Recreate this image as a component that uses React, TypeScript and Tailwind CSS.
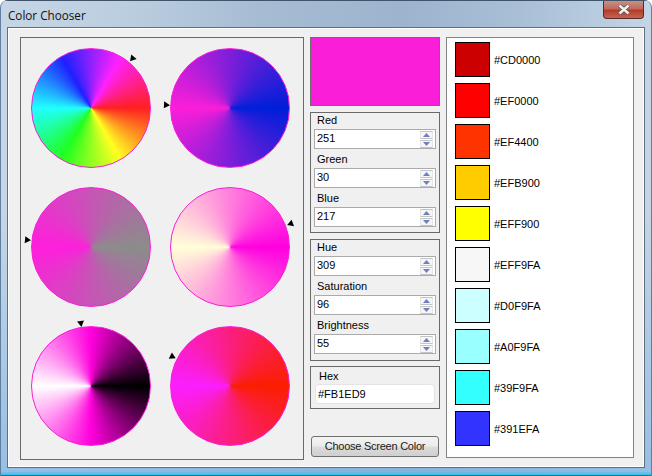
const WHEELS = [
  { id: 'hue', gradient: 'bg-[conic-gradient(from_90deg,#ff2020,#ffff20,#20ff20,#20ffff,#2020ff,#ff20ff,#ff2020)]', x: 101, y: 11 },
  { id: 'red', gradient: 'bg-[conic-gradient(from_90deg,#001ed9,#fb1ed9,#001ed9)]', x: -3, y: 57 },
  { id: 'sat', gradient: 'bg-[conic-gradient(from_90deg,#8c8c8c,#ff1edd,#8c8c8c)]', x: -3, y: 53 },
  { id: 'green', gradient: 'bg-[conic-gradient(from_90deg,#ff00e0,#ffffd9,#ff00e0)]', x: 120, y: 37 },
  { id: 'bright', gradient: 'bg-[conic-gradient(from_90deg,#000000,#ff00dd,#ffffff,#ff00dd,#000000)]', x: 50, y: -2 },
  { id: 'blue', gradient: 'bg-[conic-gradient(from_90deg,#fb1e00,#fb1eff,#fb1e00)]', x: 3, y: 31 },
];

const SWATCHES = [
  { hex: '#CD0000', bg: 'bg-[#cc0000]' },
  { hex: '#EF0000', bg: 'bg-[#ff0000]' },
  { hex: '#EF4400', bg: 'bg-[#ff3300]' },
  { hex: '#EFB900', bg: 'bg-[#ffcc00]' },
  { hex: '#EFF900', bg: 'bg-[#ffff00]' },
  { hex: '#EFF9FA', bg: 'bg-[#f7f7f7]' },
  { hex: '#D0F9FA', bg: 'bg-[#ccffff]' },
  { hex: '#A0F9FA', bg: 'bg-[#99ffff]' },
  { hex: '#39F9FA', bg: 'bg-[#33ffff]' },
  { hex: '#391EFA', bg: 'bg-[#3333ff]' },
];

function Wheel({ gradient, x, y }: { gradient: string; x: number; y: number }) {
  // marker always points at the wheel centre
  const angle = (Math.atan2(60 - y, 60 - x) * 180) / Math.PI;
  return (
    <div className={`relative w-[120px] h-[120px] rounded-full border border-[#fb1ed9] ${gradient}`}>
      <svg
        className="absolute w-2 h-2"
        viewBox="0 0 8 8"
        style={{ left: x - 5, top: y - 5, transform: `rotate(${angle}deg)` }}
      >
        <polygon points="1,0.5 7,4 1,7.5" fill="#000" />
      </svg>
    </div>
  );
}

function Spinner({ label, value, first }: { label: string; value: string; first?: boolean }) {
  return (
    <div className={first ? '' : 'mt-[3px]'}>
      <div className="h-4 pl-[3px] leading-[14px]">{label}</div>
      <div className="flex items-center h-5 border border-[#ababab] bg-white pl-[2px] pr-px">
        <span className="flex-1 leading-none pb-[2px]">{value}</span>
        <div className="flex flex-col gap-px w-[13px] mr-px">
          <div className="flex items-center justify-center h-2 bg-[#f6f6f8] border-y border-y-[#c4c4c4] border-x border-x-[#e6e6e6]">
            <svg className="w-[7px] h-1" viewBox="0 0 7 4">
              <polygon points="3.5,0 7,4 0,4" fill="#6d80bd" />
            </svg>
          </div>
          <div className="flex items-center justify-center h-2 bg-[#f6f6f8] border-y border-y-[#c4c4c4] border-x border-x-[#e6e6e6]">
            <svg className="w-[7px] h-1" viewBox="0 0 7 4">
              <polygon points="0,0 7,0 3.5,4" fill="#6d80bd" />
            </svg>
          </div>
        </div>
      </div>
    </div>
  );
}

export default function App() {
  return (
    <div className="w-[652px] h-[476px] flex flex-col overflow-hidden rounded-t-lg border-x border-x-[#5f7f9f] text-[11px] text-black font-['Liberation_Sans',sans-serif] bg-[linear-gradient(180deg,transparent_45%,rgba(125,178,228,0.65)_100%),linear-gradient(90deg,#c6d6e6_0%,#b9ccde_22%,#a6bcd3_40%,#9cb4ce_62%,#a8bfd6_80%,#c4d5e5_100%)]">
      {/* Title bar */}
      <div className="flex h-[27px] shrink-0 pl-[7px] border-t border-[#3f5468]">
        <span className="pt-[6px] text-[11.7px] leading-4 text-[#111] font-['Open_Sans',sans-serif]">
          Color Chooser
        </span>
        <div className="ml-auto mr-[7px] flex items-center justify-center w-[41px] h-[18px] rounded-b border border-t-0 border-[#5a2a28] bg-[linear-gradient(180deg,#c98f86_0%,#c06a5c_45%,#b23c2b_55%,#c66451_100%)]">
          <svg className="w-[14px] h-[11px]" viewBox="0 0 14 11">
            <path d="M2.5 1.5 L11.5 9.5 M11.5 1.5 L2.5 9.5" stroke="#5a4a4a" strokeWidth="4" />
            <path d="M2.5 1.5 L11.5 9.5 M11.5 1.5 L2.5 9.5" stroke="#f0eeee" strokeWidth="2.6" />
          </svg>
        </div>
      </div>

      {/* Client area */}
      <div className="flex flex-1 gap-[6px] mx-[6px] pl-3 pr-[9px] pt-[9px] bg-[#f0f0f0] border border-[#5f6f7f] shadow-[inset_0_0_0_1px_#ffffff]">
        <div className="w-[284px] h-[423px] border border-[#696969] pl-[10px] pt-[10px]">
          <div className="grid grid-cols-[120px_120px] gap-[19px]">
            {WHEELS.map((w) => (
              <Wheel key={w.id} gradient={w.gradient} x={w.x} y={w.y} />
            ))}
          </div>
        </div>

        <div className="flex flex-col w-[130px]">
          <div className="h-[69px] border border-[#6e6e6e] bg-[#fb1ed9]" />
          <div className="mt-[6px] h-[121px] border border-[#696969] px-[3px]">
            <Spinner first label="Red" value="251" />
            <Spinner label="Green" value="30" />
            <Spinner label="Blue" value="217" />
          </div>
          <div className="mt-[6px] h-[122px] border border-[#696969] px-[3px]">
            <Spinner first label="Hue" value="309" />
            <Spinner label="Saturation" value="96" />
            <Spinner label="Brightness" value="55" />
          </div>
          <div className="mt-[5px] h-[43px] border border-[#696969] px-1">
            <div className="h-[17px] pl-1 leading-[19px]">Hex</div>
            <div className="h-5 flex items-center pl-[2px] bg-white border border-[#e4e4e4] rounded-sm">#FB1ED9</div>
          </div>
          <button className="mt-[27px] mx-px h-[21px] rounded-[3px] border border-[#707070] tracking-[-0.25px] text-[#1a1a1a] bg-[linear-gradient(180deg,#f3f3f3_0%,#ebebeb_48%,#dcdcdc_52%,#cfcfcf_100%)]">
            Choose Screen Color
          </button>
        </div>

        <div className="w-[188px] h-[421px] border border-[#848484] bg-white pl-2 pt-1">
          <div className="flex flex-col gap-[6px]">
            {SWATCHES.map((s) => (
              <div key={s.hex} className="flex items-center gap-1">
                <div className={`w-[35px] h-[35px] border border-black ${s.bg}`} />
                <span className="pt-[2px]">{s.hex}</span>
              </div>
            ))}
          </div>
        </div>
      </div>

      {/* Bottom frame */}
      <div className="h-2 shrink-0 border-b border-[#2a6f88] bg-[linear-gradient(180deg,transparent_0%,transparent_45%,#29c6ee_100%)]" />
    </div>
  );
}
